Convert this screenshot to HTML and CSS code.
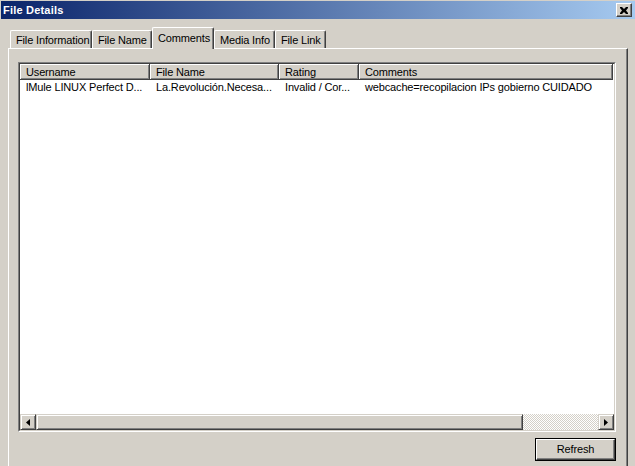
FILE: index.html
```html
<!DOCTYPE html>
<html>
<head>
<meta charset="utf-8">
<link rel="stylesheet" href="styles.css">
</head>
<body>
<div class="window">
  <div class="titlebar">
    <span class="title">File Details</span>
    <span class="close"><svg width="8" height="7" viewBox="0 0 8 7"><path d="M0 0h2l2 2 2-2h2v1l-2 2.5 2 2.5v1h-2l-2-2-2 2h-2v-1l2-2.5-2-2.5z" fill="#000"/></svg></span>
  </div>
  <div class="tabs">
    <div class="tab t1">File Information</div>
    <div class="tab t2">File Name</div>
    <div class="tab sel t3">Comments</div>
    <div class="tab t4">Media Info</div>
    <div class="tab t5">File Link</div>
  </div>
  <div class="panel">
    <div class="list">
      <div class="list-inner">
        <div class="header">
          <div class="hcell c1">Username</div>
          <div class="hcell c2">File Name</div>
          <div class="hcell c3">Rating</div>
          <div class="hcell c4">Comments</div>
        </div>
        <div class="rows">
          <div class="row">
            <div class="cell c1">lMule LINUX Perfect D...</div>
            <div class="cell c2">La.Revolución.Necesa...</div>
            <div class="cell c3">Invalid / Cor...</div>
            <div class="cell c4">webcache=recopilacion IPs gobierno CUIDADO</div>
          </div>
        </div>
        <div class="hscroll">
          <div class="sbtn"><svg width="4" height="7" viewBox="0 0 4 7"><path d="M4 0v7L0 3.5z" fill="#000"/></svg></div>
          <div class="thumb"></div>
          <div class="track"></div>
          <div class="sbtn"><svg width="4" height="7" viewBox="0 0 4 7"><path d="M0 0v7L4 3.5z" fill="#000"/></svg></div>
        </div>
      </div>
    </div>
    <div class="actions">
      <div class="button"><span>Refresh</span></div>
    </div>
  </div>
</div>
</body>
</html>
```
FILE: styles.css
```css
html, body {
  margin: 0;
  padding: 0;
}
body {
  width: 635px;
  height: 466px;
  overflow: hidden;
  background: #d4d0c8;
  font-family: "Liberation Sans", Arial, sans-serif;
  font-size: 11px;
  letter-spacing: -0.15px;
  color: #000;
}
.window {
  display: flex;
  flex-direction: column;
  height: 466px;
}
.titlebar {
  margin-top: 1px;
  height: 18px;
  margin-left: 1px;
  background: linear-gradient(to right, #0a246a, #a6caf0);
  display: flex;
  align-items: center;
  justify-content: space-between;
  padding-left: 2px;
  padding-right: 3px;
}
.title {
  color: #fff;
  font-weight: bold;
  font-size: 11px;
  letter-spacing: 0.2px;
}
.close {
  width: 16px;
  height: 14px;
  box-sizing: border-box;
  background: #d4d0c8;
  border-top: 1px solid #fff;
  border-left: 1px solid #fff;
  border-right: 1px solid #404040;
  border-bottom: 1px solid #404040;
  box-shadow: inset -1px -1px 0 #808080;
  display: flex;
  align-items: center;
  justify-content: center;
  padding-right: 1px;
}
.tabs {
  margin-top: 8px;
  height: 21px;
  display: flex;
  align-items: flex-end;
  padding-left: 10px;
}
.tab {
  box-sizing: border-box;
  height: 18px;
  border-top: 1px solid #fff;
  border-left: 1px solid #fff;
  border-right: 1px solid #404040;
  border-top-left-radius: 2px;
  border-top-right-radius: 2px;
  box-shadow: inset -1px 0 0 #808080;
  padding-left: 5px;
  padding-top: 1px;
  line-height: 16px;
  white-space: nowrap;
  overflow: hidden;
  background: #d4d0c8;
}
.t1 { width: 82px; }
.t2 { width: 60px; }
.t3 { width: 62px; }
.t4 { width: 61px; }
.t5 { width: 51px; }
.tab.sel {
  height: 22px;
  margin-bottom: -1px;
  position: relative;
  z-index: 1;
  line-height: 18px;
  padding-top: 1px;
  padding-left: 5px;
}
.panel {
  flex: 1;
  margin-left: 8px;
  width: 620px;
  box-sizing: border-box;
  border-top: 1px solid #fff;
  border-left: 1px solid #fff;
  border-right: 1px solid #404040;
  box-shadow: inset -1px 0 0 #808080;
  padding: 13px 11px 0 9px;
  display: flex;
  flex-direction: column;
}
.list {
  height: 370px;
  box-sizing: border-box;
  border-top: 1px solid #808080;
  border-left: 1px solid #808080;
  border-right: 1px solid #fff;
  border-bottom: 1px solid #fff;
}
.list-inner {
  height: 100%;
  box-sizing: border-box;
  border-top: 1px solid #404040;
  border-left: 1px solid #404040;
  border-right: 1px solid #d4d0c8;
  border-bottom: 1px solid #d4d0c8;
  background: #fff;
  display: flex;
  flex-direction: column;
}
.header {
  display: flex;
  height: 16px;
  flex: none;
}
.hcell {
  box-sizing: border-box;
  height: 16px;
  background: #d4d0c8;
  border-right: 1px solid #404040;
  border-bottom: 1px solid #404040;
  box-shadow: inset 1px 1px 0 #fff, inset -1px -1px 0 #808080;
  padding-left: 6px;
  line-height: 16px;
  white-space: nowrap;
  overflow: hidden;
}
.c1 { width: 130px; }
.c2 { width: 129px; }
.c3 { width: 80px; }
.c4 { width: 254px; }
.rows {
  flex: 1;
}
.row {
  display: flex;
  height: 14px;
}
.cell {
  box-sizing: border-box;
  padding-left: 6px;
  line-height: 14px;
  white-space: nowrap;
  overflow: hidden;
}
.c2.cell { padding-left: 6px; }
.hscroll {
  display: flex;
  height: 16px;
  flex: none;
}
.sbtn {
  width: 16px;
  height: 16px;
  box-sizing: border-box;
  background: #d4d0c8;
  border-top: 1px solid #d4d0c8;
  border-left: 1px solid #d4d0c8;
  border-right: 1px solid #404040;
  border-bottom: 1px solid #404040;
  box-shadow: inset 1px 1px 0 #fff, inset -1px -1px 0 #808080;
  display: flex;
  align-items: center;
  justify-content: center;
}
.thumb {
  width: 487px;
  box-sizing: border-box;
  background: #d4d0c8;
  border-top: 1px solid #d4d0c8;
  border-left: 1px solid #d4d0c8;
  border-right: 1px solid #404040;
  border-bottom: 1px solid #404040;
  box-shadow: inset 1px 1px 0 #fff, inset -1px -1px 0 #808080;
}
.track {
  flex: 1;
  background: repeating-conic-gradient(#d4d0c8 0 25%, #fff 0 50%) 0 0 / 2px 2px;
}
.actions {
  display: flex;
  justify-content: flex-end;
  margin-top: 6px;
}
.button {
  width: 81px;
  height: 23px;
  box-sizing: border-box;
  border: 1px solid #000;
}
.button span {
  display: block;
  height: 100%;
  box-sizing: border-box;
  border-top: 1px solid #fff;
  border-left: 1px solid #fff;
  border-right: 1px solid #404040;
  border-bottom: 1px solid #404040;
  box-shadow: inset -1px -1px 0 #808080;
  text-align: center;
  line-height: 19px;
}
```
